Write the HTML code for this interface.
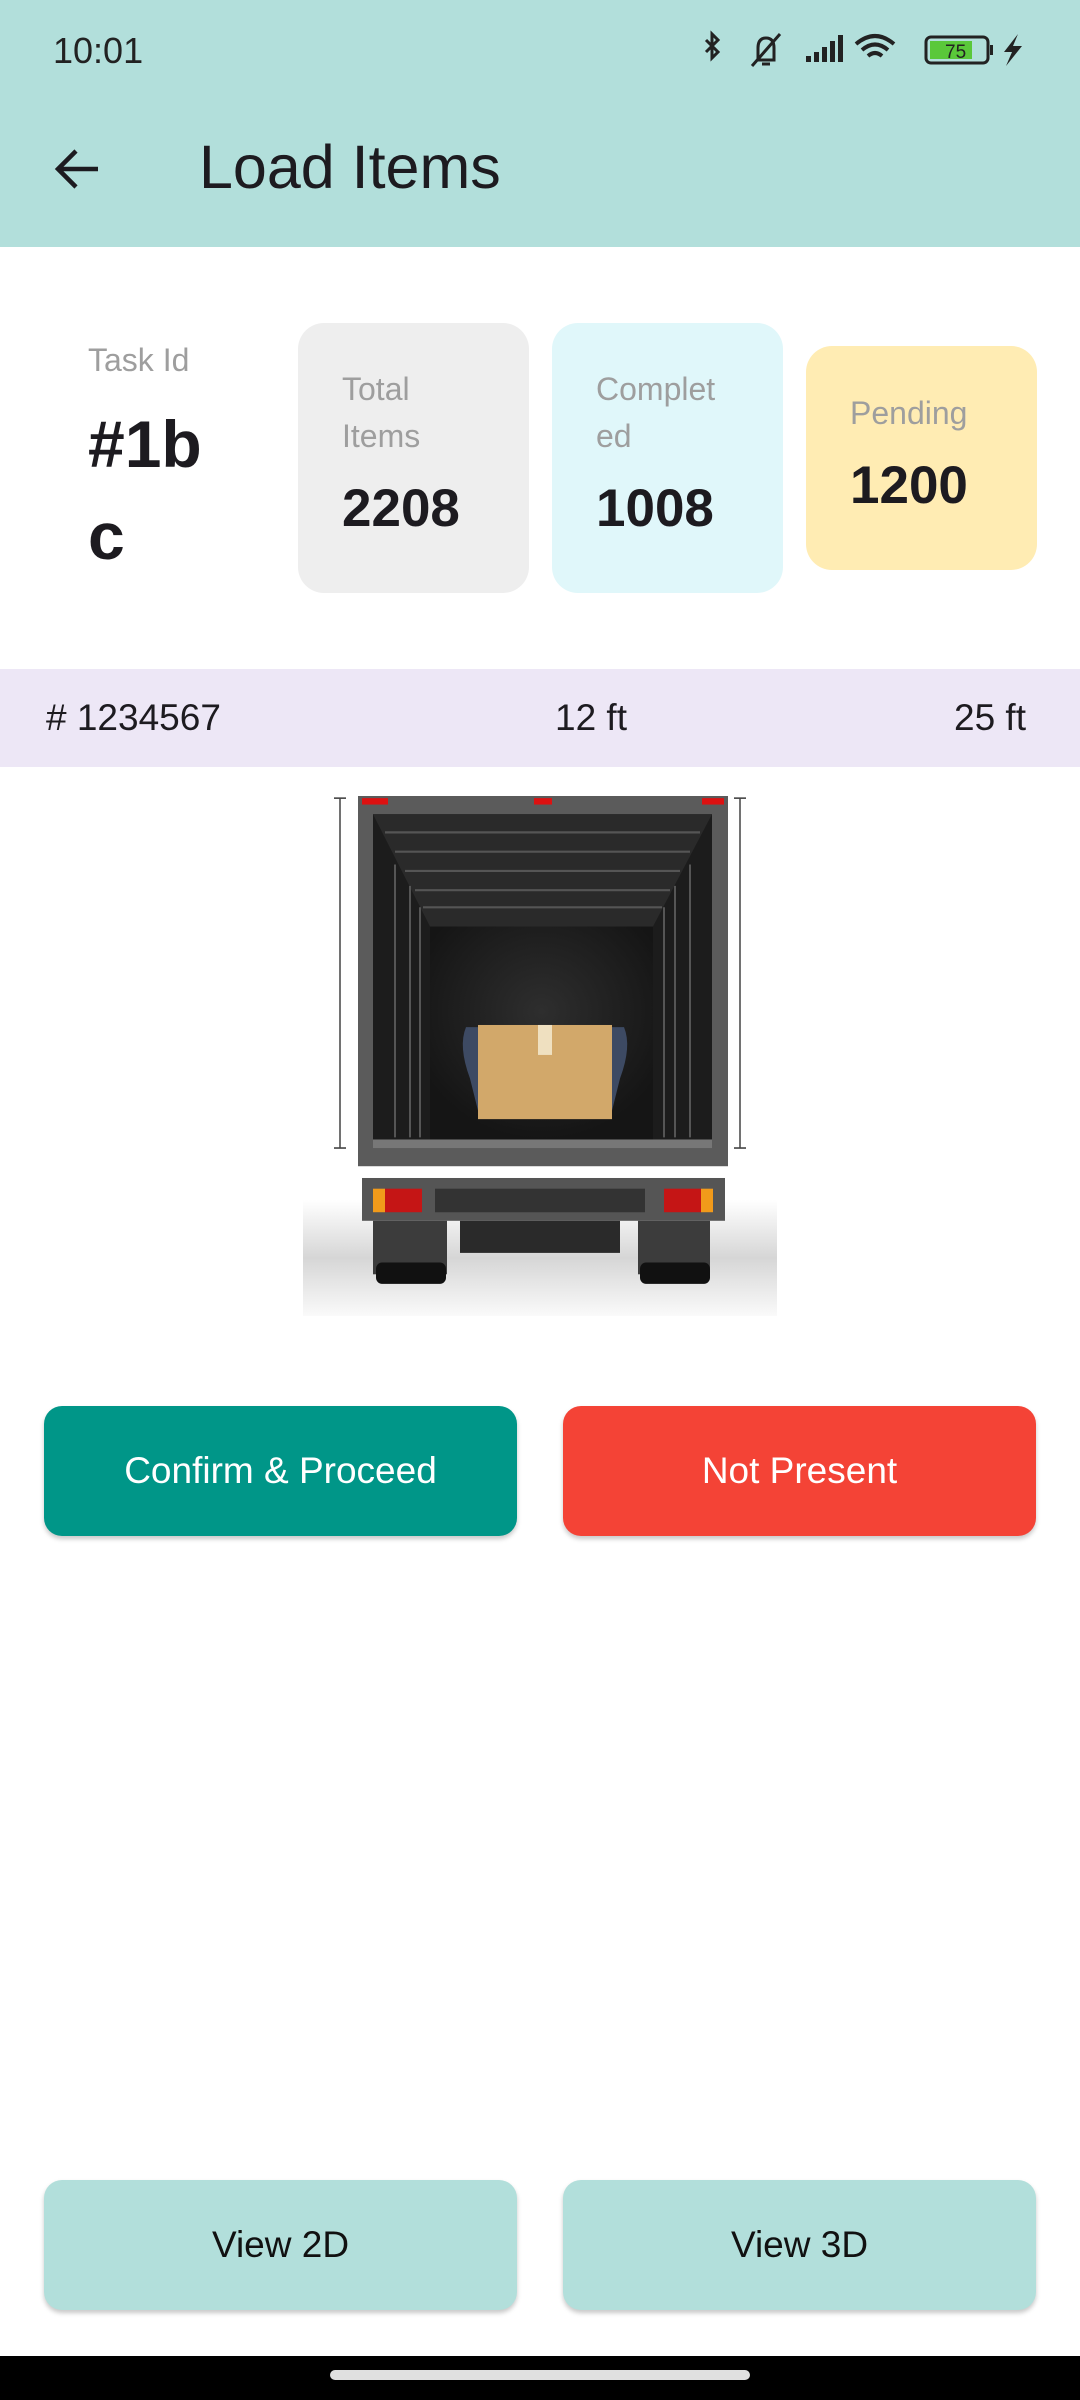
<!DOCTYPE html>
<html><head><meta charset="utf-8">
<style>
*{margin:0;padding:0;box-sizing:border-box}
body{width:1080px;height:2400px;position:relative;background:#fff;font-family:"Liberation Sans",sans-serif;overflow:hidden;color:#1d1b20}
.abs{position:absolute}
.appbar{left:0;top:0;width:1080px;height:247px;background:#b2dfdb}
.card{border-radius:26px}
.lbl{color:#9e9e9e;font-size:32px;line-height:47px}
.num{font-weight:bold;font-size:53px;color:#1d1b20}
.btn{border-radius:18px;display:flex;align-items:center;justify-content:center;font-size:37px;box-shadow:0 3px 5px rgba(0,0,0,.22)}
</style></head><body>
<div class="abs appbar"></div>
<div class="abs" style="left:53px;top:30px;font-size:36px;color:#222">10:01</div>
<svg class="abs" style="left:700px;top:30px" width="330" height="44" viewBox="0 0 330 44">
<path d="M6 10 L18 22 L12 28 L12 4 L18 10 L6 22" fill="none" stroke="#222" stroke-width="3"/>
<g fill="none" stroke="#222" stroke-width="3"><path d="M58 30 L58 18 Q58 8 66 8 Q74 8 74 18 L74 30 Z"/><path d="M52 36 L80 4"/><path d="M62 34 L70 34"/></g>
<g fill="#222"><rect x="106" y="26" width="5" height="6"/><rect x="114" y="22" width="5" height="10"/><rect x="122" y="17" width="5" height="15"/><rect x="130" y="11" width="5" height="21"/><rect x="138" y="5" width="5" height="27"/></g>
<g fill="none" stroke="#222" stroke-width="4"><path d="M156 14 Q175 -2 194 14"/><path d="M162 20 Q175 9 188 20"/><path d="M168 26 Q175 20 182 26"/></g>
<rect x="226" y="7" width="62" height="26" rx="5" fill="none" stroke="#222" stroke-width="3"/>
<rect x="230" y="11" width="42" height="18" fill="#5ac83a"/>
<text x="245" y="28" font-size="19" font-family="Liberation Sans" fill="#222">75</text>
<rect x="290" y="15" width="3" height="10" fill="#222"/>
<path d="M318 4 L304 22 L312 22 L306 36 L322 16 L313 16 Z" fill="#222"/>
</svg>
<svg class="abs" style="left:52px;top:145px" width="50" height="48" viewBox="0 0 50 48"><path d="M46 24 H6 M24 6 L6 24 L24 42" fill="none" stroke="#1d1b20" stroke-width="4.5"/></svg>
<div class="abs" style="left:199px;top:132px;font-size:61px;color:#1d1b20">Load Items</div>

<div class="abs lbl" style="left:88px;top:337px">Task Id</div>
<div class="abs num" style="left:88px;top:398px;font-size:66px;line-height:92px">#1b<br>c</div>
<div class="abs card" style="left:298px;top:323px;width:231px;height:270px;background:#eeeeee"></div>
<div class="abs lbl" style="left:342px;top:366px">Total<br>Items</div>
<div class="abs num" style="left:342px;top:478px">2208</div>
<div class="abs card" style="left:552px;top:323px;width:231px;height:270px;background:#e0f7fa"></div>
<div class="abs lbl" style="left:596px;top:366px">Complet<br>ed</div>
<div class="abs num" style="left:596px;top:478px">1008</div>
<div class="abs card" style="left:806px;top:346px;width:231px;height:224px;background:#ffecb3"></div>
<div class="abs lbl" style="left:850px;top:390px">Pending</div>
<div class="abs num" style="left:850px;top:455px">1200</div>

<div class="abs" style="left:0;top:669px;width:1080px;height:98px;background:#ede7f6"></div>
<div class="abs" style="left:46px;top:697px;font-size:37px">#&nbsp;1234567</div>
<div class="abs" style="left:555px;top:697px;font-size:37px">12 ft</div>
<div class="abs" style="left:954px;top:697px;font-size:37px">25 ft</div>

<svg class="abs" style="left:303px;top:772px" width="474" height="544" viewBox="303 772 474 544">
<defs><linearGradient id="sh" x1="0" y1="0" x2="0" y2="1"><stop offset="0" stop-color="#fff"/><stop offset=".5" stop-color="#d6d6d6"/><stop offset="1" stop-color="#fafafa"/></linearGradient>
<radialGradient id="wall" cx=".5" cy=".4" r=".6"><stop offset="0" stop-color="#2e2e2e"/><stop offset="1" stop-color="#151515"/></radialGradient></defs>
<rect x="303" y="1200" width="474" height="116" fill="url(#sh)"/>
<g transform="translate(0,796) scale(1,1.07) translate(0,-796)">
<rect x="358" y="796" width="370" height="346" fill="#5b5b5b"/>
<rect x="373" y="813" width="339" height="310" fill="#1c1c1c"/>
<path d="M373 813 L712 813 L653 918 L430 918 Z" fill="#2a2a2a"/>
<g stroke="#555" stroke-width="2">
<line x1="385" y1="830" x2="700" y2="830"/><line x1="395" y1="848" x2="690" y2="848"/><line x1="405" y1="866" x2="680" y2="866"/><line x1="415" y1="884" x2="670" y2="884"/><line x1="423" y1="900" x2="662" y2="900"/>
<line x1="395" y1="860" x2="395" y2="1115"/><line x1="410" y1="880" x2="410" y2="1115"/><line x1="420" y1="900" x2="420" y2="1115"/><line x1="690" y1="860" x2="690" y2="1115"/><line x1="675" y1="880" x2="675" y2="1115"/><line x1="664" y1="900" x2="664" y2="1115"/></g>
<rect x="430" y="918" width="223" height="199" fill="url(#wall)"/>
<rect x="373" y="1117" width="339" height="8" fill="#777"/>
<rect x="362" y="798" width="26" height="6" fill="#d11"/><rect x="534" y="798" width="18" height="6" fill="#d11"/><rect x="702" y="798" width="22" height="6" fill="#d11"/>
<path d="M466 1012 Q458 1030 470 1060 L478 1090 L484 1090 L478 1040 L478 1012 Z" fill="#3d4a63"/>
<path d="M624 1012 Q632 1030 620 1060 L612 1090 L606 1090 L612 1040 L612 1012 Z" fill="#3d4a63"/>
<rect x="478" y="1010" width="134" height="88" fill="#d2a86a"/>
<rect x="538" y="1010" width="14" height="28" fill="#efe0c0"/>
<g stroke="#444" stroke-width="1.5"><line x1="340" y1="798" x2="340" y2="1125"/><line x1="740" y1="798" x2="740" y2="1125"/><line x1="334" y1="798" x2="346" y2="798"/><line x1="334" y1="1125" x2="346" y2="1125"/><line x1="734" y1="798" x2="746" y2="798"/><line x1="734" y1="1125" x2="746" y2="1125"/></g>
<rect x="362" y="1153" width="363" height="40" fill="#555"/>
<rect x="435" y="1163" width="210" height="22" fill="#333"/>
<rect x="373" y="1163" width="12" height="22" fill="#f19a1a"/><rect x="385" y="1163" width="37" height="22" fill="#c51515"/>
<rect x="664" y="1163" width="37" height="22" fill="#c51515"/><rect x="701" y="1163" width="12" height="22" fill="#f19a1a"/>
<rect x="373" y="1193" width="74" height="50" fill="#3c3c3c"/><rect x="638" y="1193" width="72" height="50" fill="#3c3c3c"/>
<rect x="376" y="1232" width="70" height="20" rx="6" fill="#111"/><rect x="640" y="1232" width="70" height="20" rx="6" fill="#111"/>
<rect x="460" y="1193" width="160" height="30" fill="#2a2a2a"/>
</g>
</svg>

<div class="abs btn" style="left:44px;top:1406px;width:473px;height:130px;background:#009688;color:#fff">Confirm &amp; Proceed</div>
<div class="abs btn" style="left:563px;top:1406px;width:473px;height:130px;background:#f44336;color:#fff">Not Present</div>
<div class="abs btn" style="left:44px;top:2180px;width:473px;height:130px;background:#b2dfdb;color:#111">View 2D</div>
<div class="abs btn" style="left:563px;top:2180px;width:473px;height:130px;background:#b2dfdb;color:#111">View 3D</div>

<div class="abs" style="left:0;top:2356px;width:1080px;height:44px;background:#000"></div>
<div class="abs" style="left:330px;top:2370px;width:420px;height:10px;border-radius:5px;background:#e0e0e0"></div>
</body></html>
